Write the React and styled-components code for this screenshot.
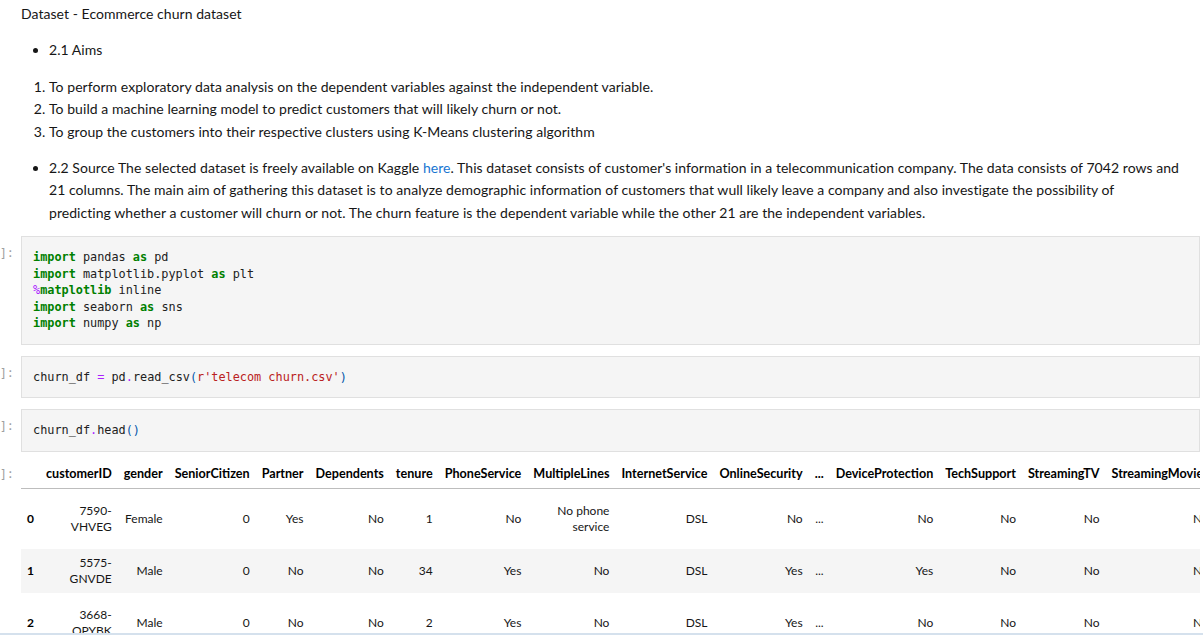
import React from 'react';
import styled, { createGlobalStyle } from 'styled-components';

const GlobalStyle = createGlobalStyle`
  html, body {
    margin: 0;
    padding: 0;
    background: #ffffff;
  }
  body {
    font-family: Lato, "Open Sans", "Noto Sans", sans-serif;
    color: rgba(0, 0, 0, 0.87);
  }
`;

const mono = `"DejaVu Sans Mono", "Liberation Mono", monospace`;

//Data

const columns = [
  'customerID', 'gender', 'SeniorCitizen', 'Partner', 'Dependents', 'tenure',
  'PhoneService', 'MultipleLines', 'InternetService', 'OnlineSecurity', '...',
  'DeviceProtection', 'TechSupport', 'StreamingTV', 'StreamingMovies', 'Contract',
  'PaperlessBilling', 'PaymentMethod', 'MonthlyCharges', 'TotalCharges', 'Churn',
];

const rows = [
  ['7590-VHVEG', 'Female', '0', 'Yes', 'No', '1', 'No', 'No phone service', 'DSL', 'No', '...', 'No', 'No', 'No', 'No', 'Month-to-month', 'Yes', 'Electronic check', '29.85', '29.85', 'No'],
  ['5575-GNVDE', 'Male', '0', 'No', 'No', '34', 'Yes', 'No', 'DSL', 'Yes', '...', 'Yes', 'No', 'No', 'No', 'One year', 'No', 'Mailed check', '56.95', '1889.5', 'No'],
  ['3668-QPYBK', 'Male', '0', 'No', 'No', '2', 'Yes', 'No', 'DSL', 'Yes', '...', 'No', 'No', 'No', 'No', 'Month-to-month', 'Yes', 'Mailed check', '53.85', '108.15', 'Yes'],
  ['7795-CFOCW', 'Male', '0', 'No', 'No', '45', 'No', 'No phone service', 'DSL', 'Yes', '...', 'Yes', 'Yes', 'No', 'No', 'One year', 'No', 'Bank transfer (automatic)', '42.30', '1840.75', 'No'],
  ['9237-HQITU', 'Female', '0', 'No', 'No', '2', 'Yes', 'No', 'Fiber optic', 'No', '...', 'No', 'No', 'No', 'No', 'Month-to-month', 'Yes', 'Electronic check', '70.70', '151.65', 'Yes'],
];

const codeCells = [
  [
    [['kw', 'import'], ['', ' pandas '], ['kw', 'as'], ['', ' pd']],
    [['kw', 'import'], ['', ' matplotlib.pyplot '], ['kw', 'as'], ['', ' plt']],
    [['op', '%'], ['kw', 'matplotlib'], ['', ' inline']],
    [['kw', 'import'], ['', ' seaborn '], ['kw', 'as'], ['', ' sns']],
    [['kw', 'import'], ['', ' numpy '], ['kw', 'as'], ['', ' np']],
  ],
  [
    [['', 'churn_df '], ['op', '='], ['', ' pd'], ['op', '.'], ['', 'read_csv'], ['br', '('], ['str', "r'telecom churn.csv'"], ['br', ')']],
  ],
  [
    [['', 'churn_df'], ['op', '.'], ['', 'head'], ['br', '()']],
  ],
];

//Components

const Code = ({ lines }) => (
  <CodeBox>
    {lines.map((tokens, j) => (
      <CodeLine key={j}>
        {tokens.map(([kind, text], k) =>
          kind ? (
            <Token key={k} $kind={kind}>
              {text}
            </Token>
          ) : (
            text
          )
        )}
      </CodeLine>
    ))}
  </CodeBox>
);

const App = () => {
  return (
    <Page>
      <GlobalStyle />
      <Notebook>
        <Cell $gap={12}>
          <Prompt />
          <Markdown>
            <p>Dataset - Ecommerce churn dataset</p>
            <ul>
              <li>2.1 Aims</li>
            </ul>
            <ol>
              <li>To perform exploratory data analysis on the dependent variables against the independent variable.</li>
              <li>To build a machine learning model to predict customers that will likely churn or not.</li>
              <li>To group the customers into their respective clusters using K-Means clustering algorithm</li>
            </ol>
            <ul>
              <li>
                2.2 Source The selected dataset is freely available on Kaggle <a href="#kaggle">here</a>. This dataset
                consists of customer's information in a telecommunication company. The data consists of 7042 rows and
                21 columns. The main aim of gathering this dataset is to analyze demographic information of customers
                that wull likely leave a company and also investigate the possibility of
                <br />
                predicting whether a customer will churn or not. The churn feature is the dependent variable while the
                other 21 are the independent variables.
              </li>
            </ul>
          </Markdown>
        </Cell>

        {codeCells.map((lines, i) => (
          <Cell key={i} $gap={i === codeCells.length - 1 ? 0 : 11}>
            <Prompt $top={9}>
              <span>[ ]:</span>
            </Prompt>
            <Code lines={lines} />
          </Cell>
        ))}

        <Cell>
          <Prompt $top={14}>
            <span>[ ]:</span>
          </Prompt>
          <Output>
            <Frame>
              <thead>
                <tr>
                  <th></th>
                  {columns.map((c) => (
                    <th key={c}>{c}</th>
                  ))}
                </tr>
              </thead>
              <tbody>
                {rows.map((r, i) => (
                  <tr key={i}>
                    <th>{i}</th>
                    {r.map((v, j) => (
                      <Value key={j} $nowrap={j >= 15}>
                        {v}
                      </Value>
                    ))}
                  </tr>
                ))}
              </tbody>
            </Frame>
          </Output>
        </Cell>
      </Notebook>
    </Page>
  );
};

export default App;

//Styles

const Page = styled.div`
  height: 635px;
  display: flex;
  flex-direction: column;
  overflow: hidden;
`;

const Notebook = styled.main`
  flex: 1;
  min-height: 0;
  overflow: hidden;
  padding-right: 3px;
  border-bottom: 2px solid #d5e1ed;
`;

const Cell = styled.div`
  display: flex;
  align-items: flex-start;
  margin-bottom: ${(p) => p.$gap || 0}px;
`;

const Prompt = styled.div`
  flex: 0 0 21px;
  width: 21px;
  display: flex;
  justify-content: flex-end;
  overflow: hidden;
  box-sizing: border-box;
  padding: ${(p) => p.$top || 0}px 7px 0 0;
  font-family: ${mono};
  font-size: 11.85px;
  line-height: 16.5px;
  color: #a0a0a0;
  white-space: pre;
`;

const Markdown = styled.div`
  flex: 1;
  min-width: 0;
  padding-top: 3px;
  padding-right: 10px;
  font-size: 14px;
  line-height: 22.4px;
  letter-spacing: 0.05px;
  color: #161616;

  p,
  ul,
  ol {
    margin: 0 0 14px;
  }

  > :last-child {
    margin-bottom: 0;
  }

  ul,
  ol {
    padding-left: 28px;
  }

  a {
    color: #1976d2;
    text-decoration: none;
  }
`;

const CodeBox = styled.pre`
  flex: 1;
  min-width: 0;
  margin: 0;
  padding: 12px 11px;
  background: #f5f5f5;
  border: 1px solid #e0e0e0;
  font-family: ${mono};
  font-size: 11.85px;
  line-height: 16.5px;
  color: #212121;
`;

const CodeLine = styled.div`
  white-space: pre;
`;

const tokenColors = {
  kw: '#008000',
  op: '#aa22ff',
  str: '#ba2121',
  br: '#0055aa',
};

const Token = styled.span`
  color: ${(p) => tokenColors[p.$kind]};
  font-weight: ${(p) => (p.$kind === 'kw' ? 'bold' : 'normal')};
`;

const Output = styled.div`
  flex: 1;
  min-width: 0;
  overflow: hidden;
`;

const Frame = styled.table`
  border-collapse: separate;
  border-spacing: 0 8px;
  font-size: 12px;
  line-height: 16px;
  color: #161616;

  th,
  td {
    padding: 6px;
    text-align: right;
    vertical-align: middle;
  }

  thead th {
    font-size: 12.6px;
    font-weight: bold;
    color: #000;
    border-bottom: 1px solid #bdbdbd;
    vertical-align: bottom;
  }

  tbody th {
    font-weight: bold;
    color: #000;
    text-align: left;
  }

  tbody tr:nth-child(even) {
    background: #f5f5f5;
  }
`;

const Value = styled.td`
  white-space: ${(p) => (p.$nowrap ? 'nowrap' : 'normal')};
`;
